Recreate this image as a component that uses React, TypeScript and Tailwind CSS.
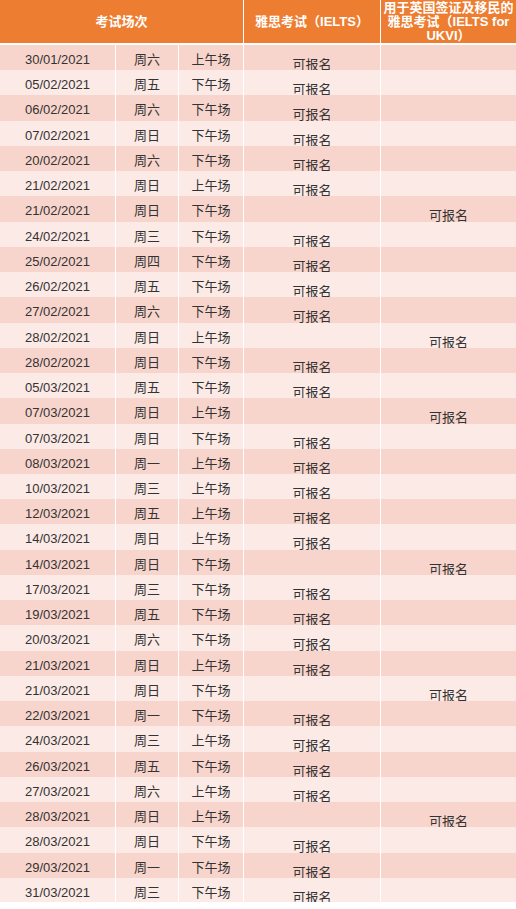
import React from 'react';

type Row = [string, string, string, 'I' | 'U'];

// 考试场次数据：日期、星期、场次、可报名的考试类型
const rows: Row[] = [
  ['30/01/2021', '周六', '上午场', 'I'],
  ['05/02/2021', '周五', '下午场', 'I'],
  ['06/02/2021', '周六', '下午场', 'I'],
  ['07/02/2021', '周日', '下午场', 'I'],
  ['20/02/2021', '周六', '下午场', 'I'],
  ['21/02/2021', '周日', '上午场', 'I'],
  ['21/02/2021', '周日', '下午场', 'U'],
  ['24/02/2021', '周三', '下午场', 'I'],
  ['25/02/2021', '周四', '下午场', 'I'],
  ['26/02/2021', '周五', '下午场', 'I'],
  ['27/02/2021', '周六', '下午场', 'I'],
  ['28/02/2021', '周日', '上午场', 'U'],
  ['28/02/2021', '周日', '下午场', 'I'],
  ['05/03/2021', '周五', '下午场', 'I'],
  ['07/03/2021', '周日', '上午场', 'U'],
  ['07/03/2021', '周日', '下午场', 'I'],
  ['08/03/2021', '周一', '上午场', 'I'],
  ['10/03/2021', '周三', '上午场', 'I'],
  ['12/03/2021', '周五', '上午场', 'I'],
  ['14/03/2021', '周日', '上午场', 'I'],
  ['14/03/2021', '周日', '下午场', 'U'],
  ['17/03/2021', '周三', '下午场', 'I'],
  ['19/03/2021', '周五', '下午场', 'I'],
  ['20/03/2021', '周六', '下午场', 'I'],
  ['21/03/2021', '周日', '上午场', 'I'],
  ['21/03/2021', '周日', '下午场', 'U'],
  ['22/03/2021', '周一', '下午场', 'I'],
  ['24/03/2021', '周三', '上午场', 'I'],
  ['26/03/2021', '周五', '下午场', 'I'],
  ['27/03/2021', '周六', '上午场', 'I'],
  ['28/03/2021', '周日', '上午场', 'U'],
  ['28/03/2021', '周日', '下午场', 'I'],
  ['29/03/2021', '周一', '下午场', 'I'],
  ['31/03/2021', '周三', '下午场', 'I'],
];

const cols = 'grid grid-cols-[115px_62px_64px_136px_1fr] gap-x-px';

export default function App() {
  return (
    <div
      className="w-[516px] bg-white text-[13px] text-[#333333]"
      style={{ fontFamily: '"Liberation Sans", Arial, "Noto Sans CJK SC", sans-serif' }}
    >
      {/* Header */}
      <div className="grid grid-cols-[243px_136px_1fr] gap-x-px h-[43px] font-bold text-white">
        <div className="bg-[#ed7d31] flex items-center justify-center">考试场次</div>
        <div className="bg-[#ed7d31] flex items-center justify-center">雅思考试（IELTS）</div>
        <div className="bg-[#ed7d31] flex items-center justify-center text-center leading-[14px]">
          <span>
            用于英国签证及移民的
            <br />
            雅思考试（IELTS for
            <br />
            UKVI）
          </span>
        </div>
      </div>

      {/* Body */}
      <div className="mt-[2px] flex flex-col gap-y-px">
        {rows.map(([date, day, session, kind], i) => {
          const bg = i % 2 === 0 ? 'bg-[#f8d5cc]' : 'bg-[#fceae6]';
          return (
            <div key={i} className={`${cols} h-[24.24px]`}>
              <div className={`${bg} flex items-center justify-center`}>{date}</div>
              <div className={`${bg} flex items-center justify-center`}>{day}</div>
              <div className={`${bg} flex items-center justify-center`}>{session}</div>
              <div className={`${bg} flex items-center justify-center pt-[10px]`}>
                {kind === 'I' ? '可报名' : ''}
              </div>
              <div className={`${bg} flex items-center justify-center pt-[10px]`}>
                {kind === 'U' ? '可报名' : ''}
              </div>
            </div>
          );
        })}
      </div>
    </div>
  );
}
